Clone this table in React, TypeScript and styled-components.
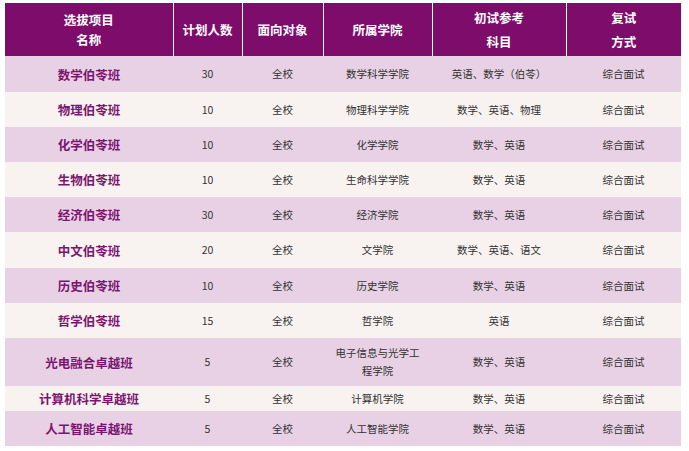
import React from 'react'
import styled, { createGlobalStyle } from 'styled-components'

const GlobalStyle = createGlobalStyle`
    html, body {
        margin: 0;
        padding: 0;
        background: #fff;
    }
    body {
        font-family: 'Noto Sans CJK SC', 'Noto Sans', sans-serif;
    }
`

const Wrap = styled.div`
    padding: 3px 8px 0 5px;
`

const Table = styled.table`
    width: 676px;
    border-collapse: collapse;
    table-layout: fixed;
`

const HeadCell = styled.th<{ $lh?: number }>`
    height: 53px;
    padding: 0 4px;
    background: #7d0c6b;
    color: #fff;
    font-size: 12.5px;
    font-weight: bold;
    line-height: ${(p) => p.$lh || 20}px;
    text-align: center;
    vertical-align: middle;
    border-left: 1px solid #fff;
    &:first-child {
        border-left: none;
    }
`

const Row = styled.tr<{ $odd: boolean; $h: number }>`
    height: ${(p) => p.$h}px;
    background: ${(p) => (p.$odd ? '#e8d1e5' : '#f8f2f0')};
`

const NameCell = styled.td`
    padding: 0 4px;
    text-align: center;
    vertical-align: middle;
    color: #7a1670;
    font-size: 12.5px;
    font-weight: bold;
`

const Cell = styled.td`
    padding: 0 6px;
    text-align: center;
    vertical-align: middle;
    color: #333;
    font-size: 10.5px;
    line-height: 18px;
`

type Item = {
    name: string
    num: string
    college: React.ReactNode
    subject: string
    h: number
}

const items: Item[] = [
    { name: '数学伯苓班', num: '30', college: '数学科学学院', subject: '英语、数学（伯苓）', h: 36 },
    { name: '物理伯苓班', num: '10', college: '物理科学学院', subject: '数学、英语、物理', h: 35 },
    { name: '化学伯苓班', num: '10', college: '化学学院', subject: '数学、英语', h: 35 },
    { name: '生物伯苓班', num: '10', college: '生命科学学院', subject: '数学、英语', h: 35 },
    { name: '经济伯苓班', num: '30', college: '经济学院', subject: '数学、英语', h: 35 },
    { name: '中文伯苓班', num: '20', college: '文学院', subject: '数学、英语、语文', h: 36 },
    { name: '历史伯苓班', num: '10', college: '历史学院', subject: '数学、英语', h: 35 },
    { name: '哲学伯苓班', num: '15', college: '哲学院', subject: '英语', h: 35 },
    {
        name: '光电融合卓越班',
        num: '5',
        college: (
            <>
                电子信息与光学工
                <br />
                程学院
            </>
        ),
        subject: '数学、英语',
        h: 48,
    },
    { name: '计算机科学卓越班', num: '5', college: '计算机学院', subject: '数学、英语', h: 25 },
    { name: '人工智能卓越班', num: '5', college: '人工智能学院', subject: '数学、英语', h: 35 },
]

export default function App(): React.ReactElement {
    return (
        <Wrap>
            <GlobalStyle />
            <Table>
                <colgroup>
                    <col style={{ width: 168 }} />
                    <col style={{ width: 69 }} />
                    <col style={{ width: 81 }} />
                    <col style={{ width: 109 }} />
                    <col style={{ width: 134 }} />
                    <col style={{ width: 115 }} />
                </colgroup>
                <thead>
                    <tr>
                        <HeadCell>
                            选拔项目
                            <br />
                            名称
                        </HeadCell>
                        <HeadCell>计划人数</HeadCell>
                        <HeadCell>面向对象</HeadCell>
                        <HeadCell>所属学院</HeadCell>
                        <HeadCell $lh={24}>
                            初试参考
                            <br />
                            科目
                        </HeadCell>
                        <HeadCell $lh={24}>
                            复试
                            <br />
                            方式
                        </HeadCell>
                    </tr>
                </thead>
                <tbody>
                    {items.map((it, i) => (
                        <Row key={it.name} $odd={i % 2 === 0} $h={it.h}>
                            <NameCell>{it.name}</NameCell>
                            <Cell>{it.num}</Cell>
                            <Cell>全校</Cell>
                            <Cell>{it.college}</Cell>
                            <Cell>{it.subject}</Cell>
                            <Cell>综合面试</Cell>
                        </Row>
                    ))}
                </tbody>
            </Table>
        </Wrap>
    )
}
